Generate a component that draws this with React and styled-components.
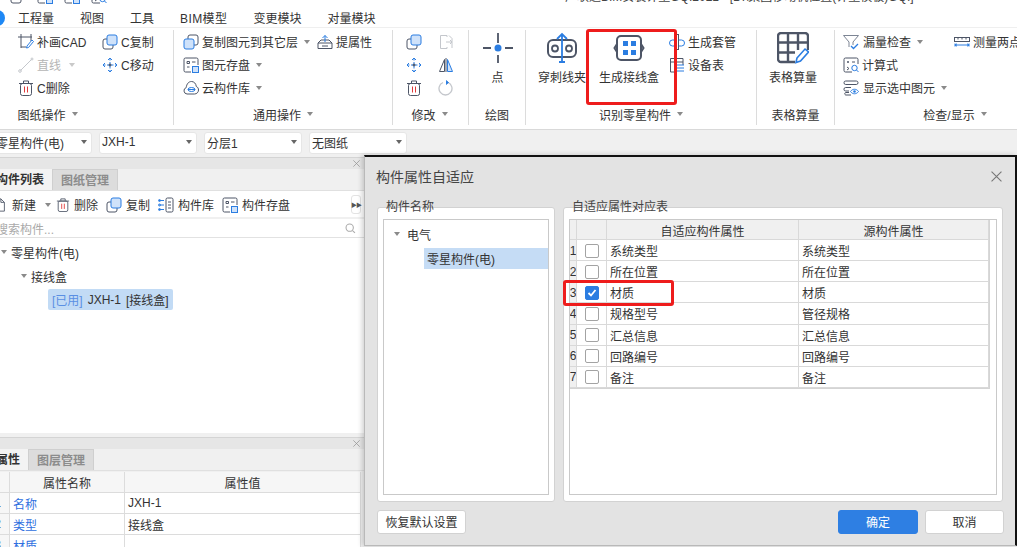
import React from "react";
import styled, { createGlobalStyle } from "styled-components";

const DARK = "#4d5566";
const BLUE = "#2b7de1";
const PALE = "#cfe2fa";
const GRAY = "#c4c7cc";
const RED = "#e03a3a";

const GlobalStyle = createGlobalStyle`
  html, body {
    margin: 0;
    padding: 0;
    width: 1017px;
    height: 547px;
    overflow: hidden;
    background: #f0f0f0;
  }
  * { box-sizing: border-box; }
  body {
    font-family: "Liberation Sans", "Noto Sans CJK SC", sans-serif;
    font-size: 12px;
    color: #333;
  }
`;

const Page = styled.div`
  position: relative;
  width: 1017px;
  height: 547px;
  overflow: hidden;
  display: flex;
  flex-direction: column;
`;

const TitleBar = styled.div`
  height: 8px;
  background: #fff;
  overflow: hidden;
  display: flex;
  align-items: flex-start;
  flex-shrink: 0;
`;

const QuickIcons = styled.div`
  display: flex;
  gap: 11px;
  margin-left: 10px;
  margin-top: -12px;
`;

const WindowTitle = styled.div`
  margin-left: 458px;
  margin-top: -11px;
  line-height: 16px;
  white-space: nowrap;
  color: #444;
`;

const MenuBar = styled.div`
  height: 19px;
  background: #fff;
  display: flex;
  align-items: center;
  gap: 26px;
  padding-left: 18px;
  flex-shrink: 0;
`;

const MenuItem = styled.span`
  letter-spacing: ${(p) => (p.$latin ? 0.4 : 0)}px;
`;

const AppDot = styled.div`
  position: absolute;
  left: -11px;
  top: 10px;
  width: 16px;
  height: 16px;
  border-radius: 50%;
  background: #1e88f5;
`;

const Ribbon = styled.div`
  height: 103px;
  background: #fff;
  border-top: 1px solid #efefef;
  border-bottom: 1px solid #d9d9d9;
  display: flex;
  padding-top: 2px;
  flex-shrink: 0;
`;

const Group = styled.div`
  width: ${(p) => p.$width}px;
  height: 95px;
  flex-shrink: 0;
  display: flex;
  flex-direction: column;
  border-right: ${(p) => (p.$last ? "0" : "1px solid #dcdcdc")};
`;

const GroupBody = styled.div`
  height: 72px;
  padding-left: ${(p) => p.$pad}px;
  display: ${(p) => (p.$row ? "flex" : "grid")};
  grid-template-columns: ${(p) => p.$cols};
  grid-auto-rows: 23px;
  white-space: nowrap;
`;

const GroupLabel = styled.div`
  height: 20px;
  margin-top: 2px;
  display: flex;
  align-items: center;
  justify-content: center;
  gap: 3px;
  white-space: nowrap;
  transform: translateX(${(p) => p.$shift || 0}px);
`;

const Tool = styled.div`
  display: flex;
  align-items: center;
  gap: ${(p) => p.$gap ?? 3}px;
  height: 23px;
  color: ${(p) => (p.$disabled ? "#b5b5b5" : "#333")};
`;

const Caret = styled.span`
  display: inline-block;
  width: 0;
  height: 0;
  margin-left: ${(p) => p.$offset ?? 3}px;
  border-left: 3.5px solid transparent;
  border-right: 3.5px solid transparent;
  border-top: 4px solid ${(p) => p.$color || "#8a8a8a"};
`;

const BigTool = styled.div`
  width: ${(p) => p.$width}px;
  margin-left: ${(p) => p.$left || 0}px;
  display: flex;
  flex-direction: column;
  align-items: center;
  flex-shrink: 0;
  padding-top: 2px;
  gap: 4px;
  transform: translateX(${(p) => p.$shift || 0}px);
`;

const BigLabel = styled.div`
  line-height: 20px;
  white-space: nowrap;
`;

const ToolStack = styled.div`
  margin-left: ${(p) => p.$left}px;
  display: flex;
  flex-direction: column;
`;

const SelectorBar = styled.div`
  height: 26px;
  background: #f0f0f0;
  display: flex;
  align-items: center;
  gap: 7px;
  margin-left: -8px;
  flex-shrink: 0;
`;

const Selector = styled.div`
  width: ${(p) => p.$width}px;
  height: 22px;
  background: #fff;
  border: 1px solid #e6e6e6;
  border-radius: 3px;
  display: flex;
  align-items: center;
  justify-content: space-between;
  padding: 0 4px 2px ${(p) => p.$pad || 3}px;
`;

const Workspace = styled.div`
  flex: 1;
  min-height: 0;
  width: 364px;
  display: flex;
  flex-direction: column;
  gap: 4px;
  background: #f0f0f0;
  padding-top: 1px;
  overflow: hidden;
`;

const Panel = styled.section`
  height: ${(p) => p.$height}px;
  flex-shrink: 0;
  display: flex;
  flex-direction: column;
  overflow: hidden;
`;

const PanelHead = styled.div`
  height: 12px;
  background: #e6e6e6;
  border-top: 1px solid #d4d4d4;
  display: flex;
  align-items: center;
  justify-content: flex-end;
  padding-right: 4px;
  flex-shrink: 0;
`;

const TabRow = styled.div`
  height: 22px;
  display: flex;
  border-bottom: 1px solid #e0e0e0;
  flex-shrink: 0;
`;

const Tab = styled.div`
  width: ${(p) => p.$width}px;
  display: flex;
  align-items: center;
  justify-content: ${(p) => (p.$active ? "flex-end" : "center")};
  padding: 0 ${(p) => (p.$active ? 8 : 0)}px 2px 0;
  font-weight: 700;
  color: ${(p) => (p.$active ? "#333" : "#8c8c8c")};
  background: ${(p) => (p.$active ? "#f3f3f3" : "#dcdcdc")};
  border-right: 1px solid #cfcfcf;
  border-top: ${(p) => (p.$active ? "0" : "1px solid #cfcfcf")};
  white-space: nowrap;
  overflow: hidden;
`;

const ListTools = styled.div`
  height: 26px;
  padding-top: 1px;
  background: #fff;
  display: flex;
  align-items: center;
  margin-left: -7px;
  flex-shrink: 0;
  position: relative;
`;

const ListTool = styled(Tool)`
  margin-right: ${(p) => p.$after}px;
  gap: ${(p) => p.$gap ?? 4}px;
`;

const MoreButton = styled.div`
  position: absolute;
  right: 3px;
  top: 4px;
  width: 10px;
  height: 19px;
  border: 1px solid #e3e3e3;
  border-radius: 3px;
  display: flex;
  align-items: center;
  justify-content: center;
  font-size: 6px;
  letter-spacing: -1px;
  color: #555;
`;

const SearchBox = styled.div`
  height: 19px;
  margin-top: 2px;
  padding: 1px 7px 0 0;
  background: #fff;
  border-bottom: 1px solid #e2e2e2;
  display: flex;
  align-items: center;
  justify-content: space-between;
  color: #aaa;
  flex-shrink: 0;
`;

const SearchHint = styled.span`
  margin-left: -4px;
`;

const Tree = styled.div`
  flex: 1;
  background: #fff;
  padding-top: 2px;
`;

const TreeRow = styled.div`
  height: 24px;
  display: flex;
  align-items: center;
  gap: 4px;
  padding-left: ${(p) => p.$indent}px;
`;

const UsedChip = styled.div`
  margin: 1px 0 0 48px;
  width: 125px;
  height: 21px;
  padding-left: 4px;
  background: #c2dbf5;
  border-radius: 2px;
  display: flex;
  align-items: center;
  gap: 5px;
  white-space: nowrap;
`;

const UsedTag = styled.span`
  color: #5a8fe3;
`;

const PropTable = styled.div`
  flex: 1;
  margin-top: 1px;
  width: 361px;
  background: #fff;
  display: grid;
  grid-template-columns: 10px 115px 236px;
  grid-auto-rows: 21px;
  border-right: 1px solid #dcdcdc;
`;

const PropCell = styled.div`
  display: flex;
  align-items: center;
  justify-content: ${(p) => (p.$center ? "center" : "flex-start")};
  padding-left: ${(p) => (p.$center ? 0 : 3)}px;
  border-right: 1px solid #dcdcdc;
  border-bottom: 1px solid #dcdcdc;
  color: ${(p) => (p.$link ? "#2f6fe0" : "#333")};
  background: ${(p) => (p.$head ? "#f6f6f6" : "#fff")};
`;

const RowNumber = styled(PropCell)`
  justify-content: flex-end;
  padding: 0 8px 0 0;
  overflow: hidden;
  background: #f6f6f6;
`;

const Dialog = styled.div`
  position: absolute;
  left: 364px;
  top: 155px;
  width: 653px;
  height: 391px;
  background: #e3e3e3;
  border-top: 2px solid #111;
  border-right: 2px solid #111;
  border-left: 1px solid #b9b9b9;
  border-bottom: 1px solid #b9b9b9;
  box-shadow: -2px 0 5px rgba(0, 0, 0, 0.18);
  padding: 0 12px;
  display: flex;
  flex-direction: column;
`;

const DialogHead = styled.div`
  height: 50px;
  flex-shrink: 0;
  display: flex;
  justify-content: space-between;
  padding-top: 10px;
  margin-left: -1px;
  font-size: 14px;
  line-height: 20px;
  color: #444;
`;

const CloseMark = styled.div`
  margin-right: 1px;
  margin-top: 4px;
`;

const DialogBody = styled.div`
  height: 295px;
  display: flex;
  gap: 8px;
  flex-shrink: 0;
`;

const GroupBox = styled.div`
  position: relative;
  width: ${(p) => p.$width}px;
  background: #fff;
  border: 1px solid #d2d2d2;
  border-radius: 3px;
  padding: 11px 5px 6px;
  display: flex;
`;

const GroupTitle = styled.div`
  position: absolute;
  left: ${(p) => p.$left}px;
  top: -9px;
  line-height: 16px;
  color: #444;
`;

const InnerBox = styled.div`
  flex: 1;
  border: 1px solid #c9c9c9;
  background: #fff;
`;

const NodeRow = styled.div`
  height: 22px;
  margin-top: 3px;
  padding-left: 10px;
  display: flex;
  align-items: center;
  gap: 7px;
`;

const SelectedNode = styled.div`
  height: 21px;
  margin: 3px 0 0 40px;
  padding: 0 0 1px 3px;
  background: #c5dcf5;
  display: flex;
  align-items: center;
`;

const MapGrid = styled.div`
  display: grid;
  width: 420px;
  grid-template-columns: 7px 30px 192px 190px;
  grid-template-rows: 20px repeat(7, 21.15px);
  border-bottom: 1px solid #d4d4d4;
  border-right: 1px solid #d4d4d4;
`;

const MapCell = styled.div`
  display: flex;
  align-items: center;
  justify-content: ${(p) => (p.$center ? "center" : "flex-start")};
  padding: 1px 0 0 ${(p) => (p.$center ? 0 : 3)}px;
  border-right: 1px solid #d9d9d9;
  border-bottom: 1px solid #d9d9d9;
  background: ${(p) => (p.$shade ? "#f0f0f0" : "#fff")};
  overflow: hidden;
`;

const Check = styled.div`
  width: 14px;
  height: 14px;
  border-radius: 2px;
  border: 1px solid ${(p) => (p.$on ? BLUE : "#a3a3a3")};
  background: ${(p) => (p.$on ? BLUE : "#fff")};
  display: flex;
  align-items: center;
  justify-content: center;
`;

const DialogFoot = styled.div`
  margin-top: 8px;
  display: flex;
  gap: 7px;
`;

const FootButton = styled.div`
  width: ${(p) => p.$width}px;
  height: 24px;
  padding-bottom: 1px;
  margin-left: ${(p) => (p.$push ? "auto" : 0)};
  margin-right: ${(p) => (p.$edge ? -1 : 0)}px;
  border-radius: 3px;
  display: flex;
  align-items: center;
  justify-content: center;
  background: ${(p) => (p.$primary ? "#2e7fe3" : "#fff")};
  color: ${(p) => (p.$primary ? "#fff" : "#333")};
  border: 1px solid ${(p) => (p.$primary ? "#2e7fe3" : "#d2d2d2")};
`;

const Highlight = styled.div`
  position: absolute;
  left: ${(p) => p.$x}px;
  top: ${(p) => p.$y}px;
  width: ${(p) => p.$w}px;
  height: ${(p) => p.$h}px;
  border: 3px solid #ee1c1c;
  border-radius: 3px;
  pointer-events: none;
`;

const glyphs = {
  patch: (
    <>
      <path d="M3 0v14M0 3h14M3 13h5M13 0v7" />
      <path d="M9 12l5-6 1.5 1.5-5 6-2 .5z" stroke={BLUE} />
    </>
  ),
  copyA: (
    <>
      <rect x="1" y="5" width="10" height="10" rx="2" />
      <rect x="5" y="1" width="10" height="10" rx="2" fill={PALE} stroke={BLUE} />
    </>
  ),
  copyB: (
    <>
      <rect x="5" y="1" width="10" height="10" rx="2" />
      <rect x="1" y="5" width="10" height="10" rx="2" fill={PALE} stroke={BLUE} />
    </>
  ),
  line: (
    <>
      <path d="M2.5 13.5L13.5 2.5" stroke={GRAY} />
      <circle cx="2" cy="14" r="1.3" stroke={GRAY} />
      <circle cx="14" cy="2" r="1" stroke={GRAY} />
    </>
  ),
  move: (
    <>
      <path d="M8 1v14M1 8h14" strokeDasharray="2.5 1.5" stroke={BLUE} />
      <path d="M6 3l2-2 2 2M6 13l2 2 2-2M3 6L1 8l2 2M13 6l2 2-2 2" stroke={BLUE} />
      <circle cx="8" cy="8" r="1" fill={DARK} />
    </>
  ),
  trash: (
    <>
      <path d="M1 3.5h14M5.5 3V1h5v2" />
      <rect x="2.5" y="3.5" width="11" height="12" rx="2" />
      <path d="M6.5 6.5v6M9.5 6.5v6" stroke={RED} />
    </>
  ),
  lift: (
    <>
      <path d="M1 9l3-3h8l3 3v5.5H1zM1 9h14M5 12h6" />
      <path d="M8 8V1.5M5.5 4L8 1.5 10.5 4" stroke={BLUE} />
    </>
  ),
  store: (
    <>
      <path d="M8 15H2.5A1.5 1.5 0 0 1 1 13.5v-11A1.5 1.5 0 0 1 2.5 1h11A1.5 1.5 0 0 1 15 2.5V8" />
      <path d="M4 4.5h2.5v2H4zM9 5h3.5M4 10h2.5" />
      <rect x="9.5" y="9.5" width="6" height="6" fill={PALE} stroke={BLUE} />
    </>
  ),
  cloud: (
    <>
      <path d="M4 14a3.3 3.3 0 0 1-.8-6.4C3.6 4 5.6 1.5 8.5 1.5c2.5 0 4.500 2 4.800 5 1.600.6 2.200 2 2.200 3.500 0 2.200-1.700 4-4 4z" />
      <ellipse cx="8.5" cy="9.5" rx="3.5" ry="2" stroke={BLUE} />
      <path d="M5 9.5h7" stroke={BLUE} />
    </>
  ),
  mirrorOff: <path d="M9 3V1.5H2.500v13H9V13M8 8h6M12 6l2 2-2 2M11 1.500l3 3V14" stroke={GRAY} />,
  mirror: (
    <>
      <path d="M6.5 2.5v12h-5z" />
      <path d="M9.5 2.5v12h5z" fill={PALE} stroke={BLUE} />
      <path d="M8 1v14" />
    </>
  ),
  rotate: (
    <>
      <path d="M10 2.5A6.5 6.5 0 1 1 5 2.5" stroke={GRAY} strokeWidth="1.3" />
      <path d="M8 .5l2.5 2L8 4.500" stroke={BLUE} fill={BLUE} />
    </>
  ),
  sleeve: (
    <>
      <rect x="0.5" y="6" width="15" height="6" rx="3" stroke={BLUE} />
      <rect x="5.5" y="0.5" width="4" height="15" fill="#fff" />
      <path d="M5.5 6V.5h4V6M5.5 12v3.500h4V12" />
    </>
  ),
  sheet: (
    <>
      <path d="M8 15H1.500V1.500H14V8M1.500 5H14" />
      <path d="M7 8h8M7 11h8M7 14h8" stroke={BLUE} />
    </>
  ),
  funnel: (
    <>
      <path d="M.5 1.500h15L10 8v3M6 8L.5 1.500M6 8v5" stroke="#7d8594" />
      <path d="M8 12l2.500 2.500L15 10" stroke={BLUE} strokeWidth="1.3" />
    </>
  ),
  ruler: (
    <>
      <rect x="0.5" y="3.5" width="15" height="4" />
      <path d="M4 3.500v2M8 3.500v2M12 3.500v2" />
      <path d="M1 11h14M1 9.500v3M15 9.500v3M3 9.800L1 11l2 1.200M13 9.800l2 1.200-2 1.200" stroke={BLUE} />
    </>
  ),
  calc: (
    <>
      <path d="M9 15H2.500A1.500 1.500 0 0 1 1 13.500v-11A1.500 1.500 0 0 1 2.500 1h11A1.500 1.500 0 0 1 15 2.500V7" />
      <path d="M4 5h2M5 4v2M4 10l2 1.500L4 13M9 5h3" />
      <circle cx="11.5" cy="11" r="2.7" stroke={BLUE} />
      <path d="M13.500 13l2 2" stroke={BLUE} />
    </>
  ),
  show: (
    <>
      <rect x="1" y="1" width="14" height="3.5" rx="1.7" />
      <path d="M8 7.500H2.700a1.700 1.700 0 0 0 0 3.500H6M6 12.500H2.700a1.300 1.300 0 0 0 0 2.500H8" />
      <path d="M7.500 11.500c2-3 6-3 8 0-2 3-6 3-8 0z" stroke={BLUE} />
      <circle cx="11.5" cy="11.5" r="1.3" fill={BLUE} stroke="none" />
    </>
  ),
  newDoc: <path d="M2 1h7l4 4v10H2zM9 1v4h4" />,
  library: (
    <>
      <rect x="8" y="1" width="7" height="14" rx="1.5" />
      <path d="M10 5h3M10 8h3M10 11h3" />
      <path d="M1 3.500h5M1 8h5M1 12.500h5" stroke={BLUE} />
      <circle cx="1.5" cy="3.5" r="1" stroke={BLUE} />
      <circle cx="1.5" cy="8" r="1" stroke={BLUE} />
      <circle cx="1.5" cy="12.5" r="1" stroke={BLUE} />
    </>
  ),
  search: (
    <>
      <circle cx="7" cy="7" r="4.5" stroke="#aaa" strokeWidth="1.3" />
      <path d="M10.500 10.500l3 3" stroke="#aaa" strokeWidth="1.3" />
    </>
  ),
};

const bigGlyphs = {
  point: (
    <>
      <path d="M16 1v10M16 23v8M1 16h8M23 16h8" strokeWidth="1.8" />
      <circle cx="16" cy="16" r="3.5" fill={BLUE} stroke="none" />
    </>
  ),
  clamp: (
    <>
      <rect x="2" y="8" width="28" height="17" rx="5" strokeWidth="2" />
      <circle cx="9" cy="16.5" r="3" strokeWidth="1.8" />
      <circle cx="23" cy="16.5" r="3" strokeWidth="1.8" />
      <path d="M16 2v28M11 7l5-5 5 5M13 30h6" stroke={BLUE} strokeWidth="1.8" />
    </>
  ),
  box: (
    <>
      <rect x="4" y="4" width="24" height="24" rx="4" strokeWidth="2" />
      <path d="M4 12l-2.500 4L4 20M28 12l2.500 4L28 20" strokeWidth="2" />
      <path d="M10 9h5v5h-5zM18 9h5v5h-5zM10 18h5v5h-5zM18 18h5v5h-5z" fill={BLUE} stroke="none" />
    </>
  ),
  table: (
    <>
      <path d="M18 30H4a3 3 0 0 1-3-3V4a3 3 0 0 1 3-3h24a3 3 0 0 1 3 3v14" strokeWidth="2.4" />
      <path d="M11 1v29M21 1v17M1 10.500h30M1 20.500h17" strokeWidth="2.4" />
      <path d="M20 26l8-9 3.500 3-8 9-4.500 1.500z" fill="#fff" stroke={BLUE} strokeWidth="1.6" />
    </>
  ),
};

function Icon({ name, size = 16 }) {
  return (
    <svg width={size} height={size} viewBox="0 0 16 16" fill="none" stroke={DARK} strokeWidth="1" style={{ flexShrink: 0 }}>
      {glyphs[name]}
    </svg>
  );
}

function BigIcon({ name }) {
  return (
    <svg width="32" height="32" viewBox="0 0 32 32" fill="none" stroke={DARK} style={{ flexShrink: 0 }}>
      {bigGlyphs[name]}
    </svg>
  );
}

function CloseIcon({ size = 10, color = "#8f8f8f" }) {
  return (
    <svg width={size} height={size} viewBox="0 0 10 10" stroke={color} strokeWidth="1" style={{ display: "block" }}>
      <path d="M.5.5l9 9M9.500.5l-9 9" />
    </svg>
  );
}

const menus = ["工程量", "视图", "工具", "BIM模型", "变更模块", "对量模块"];
const mapRows = [
  ["系统类型", "系统类型"],
  ["所在位置", "所在位置"],
  ["材质", "材质"],
  ["规格型号", "管径规格"],
  ["汇总信息", "汇总信息"],
  ["回路编号", "回路编号"],
  ["备注", "备注"],
];

export default function App() {
  return (
    <Page>
      <GlobalStyle />
      <TitleBar>
        <QuickIcons>
          <Icon name="copyA" />
          <Icon name="store" />
          <Icon name="store" />
          <Icon name="calc" />
        </QuickIcons>
        <WindowTitle>广联达BIM安装计量GQI2021 - [D:\集团移动机位置(计量模板)GQI]</WindowTitle>
      </TitleBar>
      <MenuBar>
        {menus.map((m) => (
          <MenuItem key={m} $latin={m === "BIM模型"}>{m}</MenuItem>
        ))}
      </MenuBar>
      <AppDot />

      <Ribbon>
        <Group $width={174}>
          <GroupBody $pad={18} $cols="84px auto">
            <Tool><Icon name="patch" />补画CAD</Tool>
            <Tool><Icon name="copyA" />C复制</Tool>
            <Tool $disabled><Icon name="line" />直线<Caret $offset={5} $color="#c9c9c9" /></Tool>
            <Tool><Icon name="move" />C移动</Tool>
            <Tool><Icon name="trash" />C删除</Tool>
          </GroupBody>
          <GroupLabel $shift={-39}>图纸操作<Caret /></GroupLabel>
        </Group>
        <Group $width={219}>
          <GroupBody $pad={9} $cols="134px auto">
            <Tool><Icon name="copyB" />复制图元到其它层<Caret /></Tool>
            <Tool><Icon name="lift" />提属性</Tool>
            <Tool><Icon name="store" />图元存盘<Caret /></Tool>
            <span />
            <Tool><Icon name="cloud" />云构件库<Caret /></Tool>
          </GroupBody>
          <GroupLabel>通用操作<Caret /></GroupLabel>
        </Group>
        <Group $width={76}>
          <GroupBody $pad={13} $cols="32px 16px">
            <Tool><Icon name="copyA" /></Tool>
            <Tool><Icon name="mirrorOff" /></Tool>
            <Tool><Icon name="move" /></Tool>
            <Tool><Icon name="mirror" /></Tool>
            <Tool><Icon name="trash" /></Tool>
            <Tool><Icon name="rotate" /></Tool>
          </GroupBody>
          <GroupLabel $shift={-1}>修改<Caret /></GroupLabel>
        </Group>
        <Group $width={57}>
          <GroupBody $row>
            <BigTool $width={57}>
              <BigIcon name="point" />
              <BigLabel>点</BigLabel>
            </BigTool>
          </GroupBody>
          <GroupLabel>绘图</GroupLabel>
        </Group>
        <Group $width={231}>
          <GroupBody $row $pad={12}>
            <BigTool $width={48}>
              <BigIcon name="clamp" />
              <BigLabel>穿刺线夹</BigLabel>
            </BigTool>
            <BigTool $width={60} $left={13}>
              <BigIcon name="box" />
              <BigLabel>生成接线盒</BigLabel>
            </BigTool>
            <ToolStack $left={10}>
              <Tool><Icon name="sleeve" />生成套管</Tool>
              <Tool><Icon name="sheet" />设备表</Tool>
            </ToolStack>
          </GroupBody>
          <GroupLabel>识别零星构件<Caret /></GroupLabel>
        </Group>
        <Group $width={78}>
          <GroupBody $row>
            <BigTool $width={78} $shift={-3}>
              <BigIcon name="table" />
              <BigLabel>表格算量</BigLabel>
            </BigTool>
          </GroupBody>
          <GroupLabel>表格算量</GroupLabel>
        </Group>
        <Group $width={182} $last>
          <GroupBody $pad={8} $cols="111px auto">
            <Tool $gap={4}><Icon name="funnel" />漏量检查<Caret $offset={2} /></Tool>
            <Tool><Icon name="ruler" />测量两点</Tool>
            <Tool><Icon name="calc" />计算式</Tool>
            <span />
            <Tool $gap={4}><Icon name="show" />显示选中图元<Caret $offset={2} /></Tool>
          </GroupBody>
          <GroupLabel $shift={29}>检查/显示<Caret /></GroupLabel>
        </Group>
      </Ribbon>

      <SelectorBar>
        <Selector $width={100}>零星构件(电)<Caret $offset={0} $color="#666" /></Selector>
        <Selector $width={98} $pad={2}>JXH-1<Caret $offset={0} $color="#666" /></Selector>
        <Selector $width={98} $pad={2}>分层1<Caret $offset={0} $color="#666" /></Selector>
        <Selector $width={98} $pad={2}>无图纸<Caret $offset={0} $color="#666" /></Selector>
      </SelectorBar>

      <Workspace>
        <Panel $height={276}>
          <PanelHead><CloseIcon size={7} /></PanelHead>
          <TabRow>
            <Tab $active $width={53}>构件列表</Tab>
            <Tab $width={65}>图纸管理</Tab>
          </TabRow>
          <ListTools>
            <ListTool $after={5} $gap={5}><Icon name="newDoc" size={14} />新建<Caret $offset={4} /></ListTool>
            <ListTool $after={8}><Icon name="trash" size={14} />删除</ListTool>
            <ListTool $after={8}><Icon name="copyA" />复制</ListTool>
            <ListTool $after={8}><Icon name="library" />构件库</ListTool>
            <ListTool><Icon name="store" />构件存盘</ListTool>
            <MoreButton>▶▶</MoreButton>
          </ListTools>
          <SearchBox>
            <SearchHint>搜索构件...</SearchHint>
            <Icon name="search" size={13} />
          </SearchBox>
          <Tree>
            <TreeRow $indent={1}><Caret $offset={0} />零星构件(电)</TreeRow>
            <TreeRow $indent={21}><Caret $offset={0} />接线盒</TreeRow>
            <UsedChip><UsedTag>[已用]</UsedTag>JXH-1<span>[接线盒]</span></UsedChip>
          </Tree>
        </Panel>
        <Panel $height={112}>
          <PanelHead><CloseIcon size={7} /></PanelHead>
          <TabRow>
            <Tab $active $width={29}>属性</Tab>
            <Tab $width={65}>图层管理</Tab>
          </TabRow>
          <PropTable>
            <RowNumber $head />
            <PropCell $head $center>属性名称</PropCell>
            <PropCell $head $center>属性值</PropCell>
            <RowNumber>1</RowNumber>
            <PropCell $link>名称</PropCell>
            <PropCell>JXH-1</PropCell>
            <RowNumber>2</RowNumber>
            <PropCell $link>类型</PropCell>
            <PropCell>接线盒</PropCell>
            <RowNumber>3</RowNumber>
            <PropCell $link>材质</PropCell>
            <PropCell />
          </PropTable>
        </Panel>
      </Workspace>

      <Dialog>
        <DialogHead>
          构件属性自适应
          <CloseMark><CloseIcon size={11} color="#777" /></CloseMark>
        </DialogHead>
        <DialogBody>
          <GroupBox $width={178}>
            <GroupTitle $left={8}>构件名称</GroupTitle>
            <InnerBox>
              <NodeRow><Caret $offset={0} />电气</NodeRow>
              <SelectedNode>零星构件(电)</SelectedNode>
            </InnerBox>
          </GroupBox>
          <GroupBox $width={440}>
            <GroupTitle $left={8}>自适应属性对应表</GroupTitle>
            <InnerBox>
              <MapGrid>
                <MapCell $shade />
                <MapCell $shade />
                <MapCell $shade $center>自适应构件属性</MapCell>
                <MapCell $shade $center>源构件属性</MapCell>
                {mapRows.map(([own, source], i) => (
                  <React.Fragment key={own}>
                    <MapCell $shade $center>{i + 1}</MapCell>
                    <MapCell $center>
                      <Check $on={i === 2}>
                        {i === 2 && (
                          <svg width="10" height="10" viewBox="0 0 10 10" fill="none" stroke="#fff" strokeWidth="1.8">
                            <path d="M1.5 5L4 7.5 8.5 2" />
                          </svg>
                        )}
                      </Check>
                    </MapCell>
                    <MapCell>{own}</MapCell>
                    <MapCell>{source}</MapCell>
                  </React.Fragment>
                ))}
              </MapGrid>
            </InnerBox>
          </GroupBox>
        </DialogBody>
        <DialogFoot>
          <FootButton $width={89}>恢复默认设置</FootButton>
          <FootButton $push $primary $width={80}>确定</FootButton>
          <FootButton $edge $width={79}>取消</FootButton>
        </DialogFoot>
      </Dialog>

      <Highlight $x={586} $y={29} $w={91} $h={76} />
      <Highlight $x={563} $y={280} $w={111} $h={26} />
    </Page>
  );
}
